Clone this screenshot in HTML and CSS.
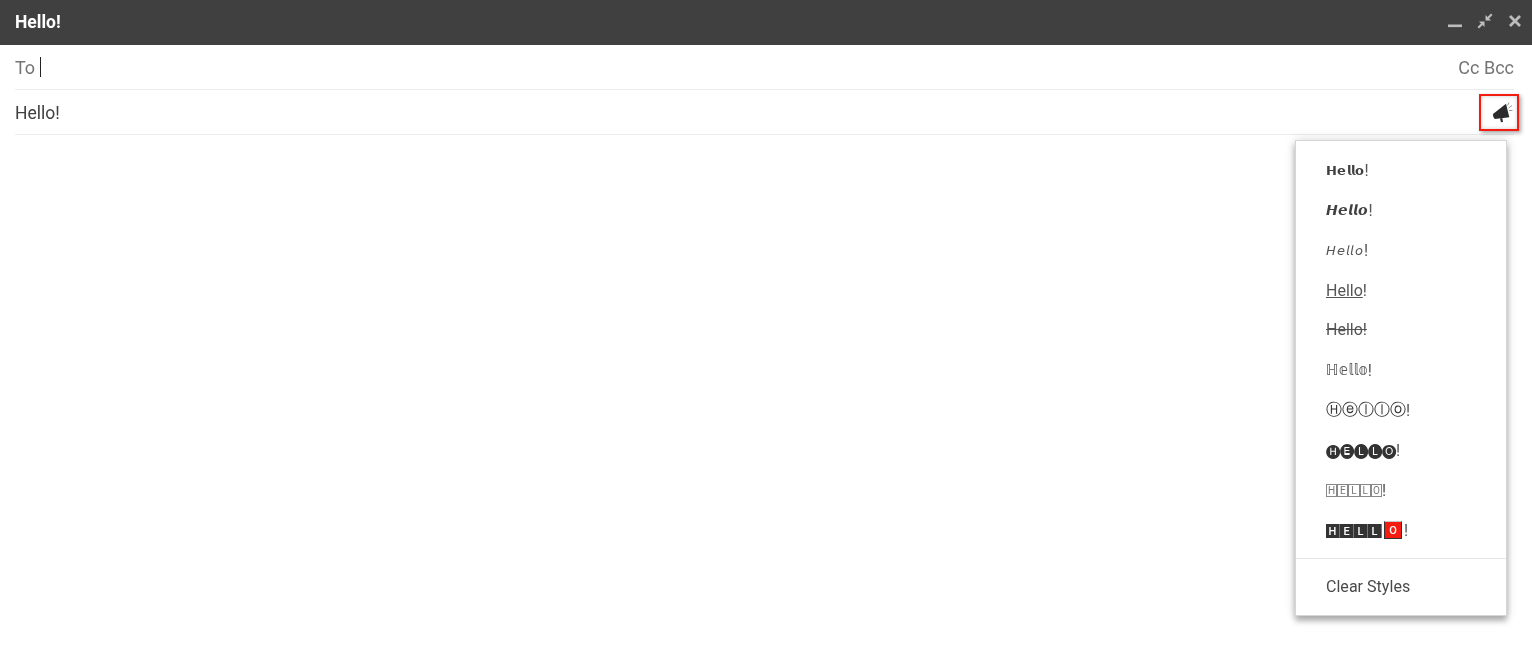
FILE: index.html
```html
<!DOCTYPE html>
<html lang="en">
<head>
<meta charset="utf-8">
<title>Hello!</title>
<link rel="stylesheet" href="styles.css">
</head>
<body>
<div class="compose">
  <header class="titlebar">
    <span class="title">Hello!</span>
    <div class="win-icons">
      <svg class="win-icon" viewBox="0 0 16 16"><rect x="1" y="11.500" width="14" height="2.600" fill="#bdbdbd"/></svg>
      <svg class="win-icon" viewBox="0 0 16 16"><path d="M14 .5 15.500 2 12 5.500l2 2H8.500V2l2 2zM2 15.500.5 14 4 10.500l-2-2h5.500V14l-2-2z" fill="#bdbdbd"/></svg>
      <svg class="win-icon" viewBox="0 0 16 16"><path d="M3 3 13 13M13 3 3 13" stroke="#bdbdbd" stroke-width="2.800" fill="none"/></svg>
    </div>
  </header>
  <div class="row row-to">
    <span class="to-label">To</span><span class="caret"></span>
    <span class="cc">Cc Bcc</span>
  </div>
  <div class="row row-subject">
    <span class="subject">Hello!</span>
  </div>
  <button class="fancy-btn" type="button" aria-label="Text styles">
    <svg viewBox="0 0 28 28" width="28" height="28">
      <path d="M8 15 21 4.800 24.300 18.200 10 20Q8 19 8 15Z" fill="#2b2b2b"/>
      <path d="M15 19.500 17.300 19 18 23 16 23.200Z" fill="#2b2b2b"/>
      <path d="M23.500 9 27 6.500M24 11.500 27.500 11.500M22.500 6.500 24 3.500" stroke="#999" stroke-width="1" fill="none"/>
    </svg>
  </button>
  <ul class="menu">
    <li class="item"><span class="g-bold">𝗛𝗲𝗹𝗹𝗼</span>!</li>
    <li class="item"><span class="g-bolditalic">𝙃𝙚𝙡𝙡𝙤</span>!</li>
    <li class="item"><span class="g-italic">𝘏𝘦𝘭𝘭𝘰</span>!</li>
    <li class="item"><span class="g-under">Hello</span>!</li>
    <li class="item g-strike">Hello!</li>
    <li class="item"><span class="g-double">ℍ𝕖𝕝𝕝𝕠</span>!</li>
    <li class="item"><span class="g-circle">Ⓗⓔⓛⓛⓞ</span>!</li>
    <li class="item"><span class="g-negcircle">🅗🅔🅛🅛🅞</span>!</li>
    <li class="item"><span class="sq">H</span><span class="sq">E</span><span class="sq">L</span><span class="sq">L</span><span class="sq">O</span>!</li>
    <li class="item"><span class="neg">H</span><span class="neg">E</span><span class="neg">L</span><span class="neg">L</span><span class="red-o">O</span><span class="bang">!</span></li>
    <li class="divider"></li>
    <li class="item clear">Clear Styles</li>
  </ul>
</div>
</body>
</html>
```
FILE: styles.css
```css
* { box-sizing: border-box; }
html, body { margin: 0; height: 100%; background: #fff; overflow: hidden; }
body { font-family: Roboto, "DejaVu Sans", sans-serif; color: #404040; }
.compose { position: relative; height: 647px; will-change: transform; }
.titlebar {
  height: 45px; background: #404040; display: flex; align-items: center;
  justify-content: space-between; padding: 0 9px 3px 15px;
}
.title { color: #fff; font-size: 17.500px; font-weight: 700; position: relative; top: 1px; }
.win-icons { display: flex; gap: 14px; }
.win-icon { width: 16px; height: 16px; display: block; }
.row {
  height: 45px; margin: 0 18px 0 15px; display: flex; align-items: center;
  border-bottom: 1px solid #ececec; font-size: 18px;
}
.row-subject { padding-top: 1px; }
.to-label { color: #757575; }
.caret { width: 1px; height: 20px; background: #222; margin-left: 5px; }
.cc { margin-left: auto; color: #757575; }
.subject { color: #404040; font-size: 17.500px; }
.fancy-btn {
  position: absolute; left: 1479px; top: 94px; width: 40px; height: 37px; padding: 0;
  background: #fff; border: 2px solid #f41c10; display: flex; align-items: center;
  justify-content: center; box-shadow: 2px 2px 4px rgba(0,0,0,.35), inset 0 0 4px rgba(0,0,0,.2);
}
.menu {
  position: absolute; left: 1295px; top: 140px; width: 212px; height: 476px;
  margin: 0; padding: 9px 0 0; list-style: none; background: #fff;
  border: 1px solid #d6d6d6; box-shadow: 0 5px 6px rgba(0,0,0,.28), 0 0 10px rgba(0,0,0,.16);
}
.item { height: 40px; padding-left: 30px; display: flex; align-items: center; font-size: 16px; color: #555; white-space: pre; }
.g-bold { font-size: 13px; color: #404040; letter-spacing: .3px; }
.g-bolditalic { font-size: 13.500px; color: #404040; letter-spacing: .1px; }
.g-italic { font-size: 12.500px; letter-spacing: .8px; }
.g-under { text-decoration: underline; text-decoration-thickness: 1px; }
.g-strike { text-decoration: line-through; }
.item.g-strike { display: block; line-height: 40px; }
.g-double { font-size: 15px; }
.g-circle { font-size: 16px; color: #333; }
.g-negcircle { font-size: 14px; color: #333; }
.sq {
  width: 11.200px; height: 13px; border: 1px solid #888; color: #777; font-size: 10px;
  display: flex; align-items: center; justify-content: center;
}
.neg {
  width: 14px; height: 14px; margin-top: 2px; background: #333; border-right: 1px solid #777; color: #fff;
  font-size: 11px; font-weight: 500; display: flex; align-items: center; justify-content: center;
}
.red-o {
  width: 18px; height: 18px; margin-left: 2px; background: #f41c10; border: 1px solid #333; border-top-color: #c8c8c8;
  color: #fff; font-size: 11px; font-weight: 500; display: flex; align-items: center; justify-content: center;
}
.bang { margin-left: 2px; }
.divider { height: 1px; background: #e6e6e6; margin: 8px 0 7px; }
.clear { color: #4a4a4a; letter-spacing: .03px; }
```
